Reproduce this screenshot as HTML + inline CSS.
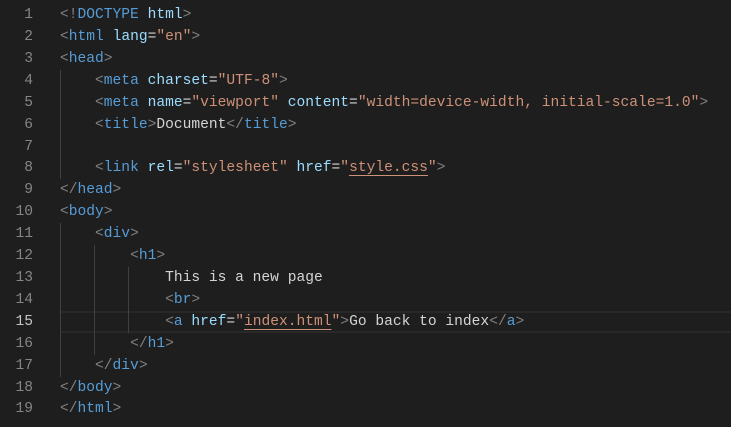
<!DOCTYPE html>
<html><head><style>
body{margin:0;background:#1e1e1e;width:731px;height:427px;overflow:hidden;position:relative;font-family:"Liberation Mono",monospace;font-size:14.6px;}
.l{position:absolute;left:0;height:22px;line-height:22px;white-space:pre;width:731px}
.n{position:absolute;right:698px;color:#858585;text-align:right}
.c{position:absolute;left:60px;color:#d4d4d4}
.cur{box-sizing:border-box;border-top:2px solid #282828;border-bottom:2px solid #282828;left:60px;width:671px;position:absolute;height:22px}
.p{color:#808080}.t{color:#569cd6}.a{color:#9cdcfe}.s{color:#ce9178}
.u{text-decoration:underline;text-decoration-color:#ce9178;text-underline-offset:4px}
.g{position:absolute;width:1px;background:#404040}
</style></head><body>
<div class="cur" style="top:311px"></div>
<div class="g" style="left:60px;top:70px;height:109px"></div>
<div class="g" style="left:60px;top:223px;height:154px"></div>
<div class="g" style="left:94px;top:245px;height:110px"></div>
<div class="g" style="left:128px;top:267px;height:66px"></div>
<div class="l" style="top:4px"><span class="n">1</span><span class="c"><span class="p">&lt;!</span><span class="t">DOCTYPE</span> <span class="a">html</span><span class="p">&gt;</span></span></div>
<div class="l" style="top:26px"><span class="n">2</span><span class="c"><span class="p">&lt;</span><span class="t">html</span> <span class="a">lang</span>=<span class="s">"en"</span><span class="p">&gt;</span></span></div>
<div class="l" style="top:48px"><span class="n">3</span><span class="c"><span class="p">&lt;</span><span class="t">head</span><span class="p">&gt;</span></span></div>
<div class="l" style="top:70px"><span class="n">4</span><span class="c">    <span class="p">&lt;</span><span class="t">meta</span> <span class="a">charset</span>=<span class="s">"UTF-8"</span><span class="p">&gt;</span></span></div>
<div class="l" style="top:92px"><span class="n">5</span><span class="c">    <span class="p">&lt;</span><span class="t">meta</span> <span class="a">name</span>=<span class="s">"viewport"</span> <span class="a">content</span>=<span class="s">"width=device-width, initial-scale=1.0"</span><span class="p">&gt;</span></span></div>
<div class="l" style="top:114px"><span class="n">6</span><span class="c">    <span class="p">&lt;</span><span class="t">title</span><span class="p">&gt;</span>Document<span class="p">&lt;/</span><span class="t">title</span><span class="p">&gt;</span></span></div>
<div class="l" style="top:136px"><span class="n">7</span></div>
<div class="l" style="top:157px"><span class="n">8</span><span class="c">    <span class="p">&lt;</span><span class="t">link</span> <span class="a">rel</span>=<span class="s">"stylesheet"</span> <span class="a">href</span>=<span class="s">"<span class="u">style.css</span>"</span><span class="p">&gt;</span></span></div>
<div class="l" style="top:179px"><span class="n">9</span><span class="c"><span class="p">&lt;/</span><span class="t">head</span><span class="p">&gt;</span></span></div>
<div class="l" style="top:201px"><span class="n">10</span><span class="c"><span class="p">&lt;</span><span class="t">body</span><span class="p">&gt;</span></span></div>
<div class="l" style="top:223px"><span class="n">11</span><span class="c">    <span class="p">&lt;</span><span class="t">div</span><span class="p">&gt;</span></span></div>
<div class="l" style="top:245px"><span class="n">12</span><span class="c">        <span class="p">&lt;</span><span class="t">h1</span><span class="p">&gt;</span></span></div>
<div class="l" style="top:267px"><span class="n">13</span><span class="c">            This is a new page</span></div>
<div class="l" style="top:289px"><span class="n">14</span><span class="c">            <span class="p">&lt;</span><span class="t">br</span><span class="p">&gt;</span></span></div>
<div class="l" style="top:311px"><span class="n" style="color:#c6c6c6">15</span><span class="c">            <span class="p">&lt;</span><span class="t">a</span> <span class="a">href</span>=<span class="s">"<span class="u">index.html</span>"</span><span class="p">&gt;</span>Go back to index<span class="p">&lt;/</span><span class="t">a</span><span class="p">&gt;</span></span></div>
<div class="l" style="top:333px"><span class="n">16</span><span class="c">        <span class="p">&lt;/</span><span class="t">h1</span><span class="p">&gt;</span></span></div>
<div class="l" style="top:355px"><span class="n">17</span><span class="c">    <span class="p">&lt;/</span><span class="t">div</span><span class="p">&gt;</span></span></div>
<div class="l" style="top:377px"><span class="n">18</span><span class="c"><span class="p">&lt;/</span><span class="t">body</span><span class="p">&gt;</span></span></div>
<div class="l" style="top:398px"><span class="n">19</span><span class="c"><span class="p">&lt;/</span><span class="t">html</span><span class="p">&gt;</span></span></div>
</body></html>
